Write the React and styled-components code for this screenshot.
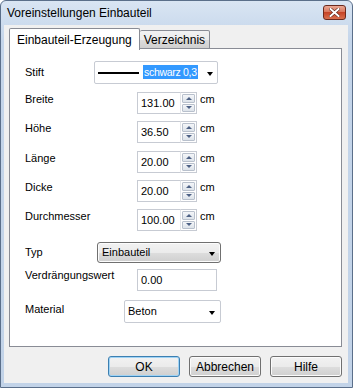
import styled, { createGlobalStyle } from 'styled-components';

const Global = createGlobalStyle`
  html, body {
    margin: 0;
    padding: 0;
    background: #fff;
  }
  * {
    box-sizing: border-box;
  }
`;

const Window = styled.div`
  width: 353px;
  height: 388px;
  display: flex;
  flex-direction: column;
  border: 1px solid #5b6f8a;
  border-radius: 6px 6px 0 0;
  background: linear-gradient(#d9e5f3, #c4d5ea 40px, #c2d3e8);
  font-family: 'Liberation Sans', Arial, sans-serif;
  font-size: 11px;
  color: #000;
  overflow: hidden;
`;

const TitleBar = styled.div`
  height: 24px;
  flex: none;
  display: flex;
  align-items: center;
  justify-content: space-between;
  padding: 0 6px 0 6px;
  font-size: 12px;
`;

const CloseButton = styled.div`
  width: 23px;
  height: 15px;
  margin-top: -2px;
  border: 1px solid #6b2a1e;
  border-radius: 3px;
  background: linear-gradient(#eba894, #d9775e 45%, #c64428 50%, #d9704f);
  display: flex;
  align-items: center;
  justify-content: center;
`;

const Client = styled.div`
  flex: 1;
  margin: 0 4px 4px 3px;
  background: #f0f0f0;
  padding: 2px 6px 0 5px;
  display: flex;
  flex-direction: column;
`;

const TabStrip = styled.div`
  display: flex;
  align-items: flex-end;
  height: 22px;
  position: relative;
  z-index: 1;
`;

const Tab = styled.div`
  height: ${(p) => (p.$active ? 22 : 19)}px;
  padding: 0 ${(p) => (p.$active ? 7 : 4)}px;
  border: 1px solid #898c95;
  border-bottom: ${(p) => (p.$active ? 'none' : '1px solid #898c95')};
  border-left: ${(p) => (p.$active ? '1px solid #898c95' : 'none')};
  border-radius: 2px 2px 0 0;
  background: ${(p) => (p.$active ? '#fff' : 'linear-gradient(#f2f2f2, #ebebeb 50%, #dddddd 51%, #cfcfcf)')};
  display: flex;
  align-items: center;
  font-size: 12px;
  margin-bottom: ${(p) => (p.$active ? -1 : 0)}px;
`;

const Panel = styled.div`
  height: 299px;
  margin-top: -1px;
  border: 1px solid #898c95;
  background: #fff;
  padding: 12px 0 0 15px;
  display: flex;
  flex-direction: column;
`;

const Row = styled.div`
  display: grid;
  grid-template-columns: ${(p) => p.$col}px auto auto;
  justify-content: start;
  align-items: start;
  margin-top: ${(p) => p.$gap || 0}px;
`;

const Label = styled.div`
  padding-top: ${(p) => p.$off || 0}px;
  line-height: 13px;
  white-space: nowrap;
`;

const Combo = styled.div`
  width: ${(p) => p.$w}px;
  height: ${(p) => p.$h || 22}px;
  border: 1px solid ${(p) => (p.$button ? '#707070' : '#c7cbd3')};
  border-radius: ${(p) => (p.$button ? 3 : 2)}px;
  background: ${(p) => (p.$button ? 'linear-gradient(#f2f2f2, #ebebeb 50%, #dddddd 51%, #cfcfcf)' : '#fff')};
  box-shadow: ${(p) => (p.$button ? 'inset 0 0 0 1px #fcfcfc' : 'none')};
  display: flex;
  align-items: center;
  padding: 0 ${(p) => p.$padr || 5}px 0 ${(p) => p.$pad || 3}px;
`;

const ComboText = styled.span`
  flex: 1;
  line-height: 13px;
`;

const PenLine = styled.span`
  flex: none;
  width: 41px;
  height: 2px;
  background: #000;
  margin-right: 4px;
`;

const Selected = styled.span`
  flex: none;
  background: #3399ff;
  color: #fff;
  font-size: 10.5px;
  letter-spacing: -0.3px;
  line-height: 14px;
  height: 14px;
  padding: 0 1px;
  margin-top: -2px;
`;

const Arrow = styled.span`
  flex: none;
  width: 0;
  height: 0;
  margin-left: auto;
  border-left: 3.5px solid transparent;
  border-right: 3.5px solid transparent;
  border-top: 4px solid #000;
  margin-top: 2px;
`;

const Spin = styled.div`
  display: flex;
  height: 22px;
`;

const Input = styled.div`
  width: ${(p) => p.$w || 43}px;
  height: 22px;
  border: 1px solid #c7cbd3;
  border-right: ${(p) => (p.$spin ? 'none' : '1px solid #c7cbd3')};
  background: #fff;
  padding: 4px 0 0 3px;
  line-height: 13px;
`;

const SpinCol = styled.div`
  width: 17px;
  height: 22px;
  display: flex;
  flex-direction: column;
  gap: 1px;
  padding: 1px;
  border: 1px solid #c7cbd3;
  border-left: 1px solid #e4e6ea;
  background: #fff;
`;

const SpinBtn = styled.div`
  flex: 1;
  border: 1px solid #b8c0cc;
  border-radius: 1px;
  background: linear-gradient(#f4f6f9, #dde3ea);
  display: flex;
  align-items: center;
  justify-content: center;
`;

const SpinArrow = styled.span`
  width: 0;
  height: 0;
  border-left: 3px solid transparent;
  border-right: 3px solid transparent;
  ${(p) => (p.$up ? 'border-bottom: 3px solid #4d6185;' : 'border-top: 3px solid #4d6185;')}
`;

const Unit = styled.span`
  margin-left: 3px;
  padding-top: 1px;
  line-height: 13px;
`;

const Footer = styled.div`
  display: flex;
  justify-content: flex-end;
  gap: 9px;
  margin-top: 9px;
`;

const Button = styled.div`
  width: 72px;
  height: 21px;
  border: 1px solid ${(p) => (p.$default ? '#3c7fb1' : '#707070')};
  border-radius: 3px;
  background: linear-gradient(#f2f2f2, #ebebeb 50%, #dddddd 51%, #cfcfcf);
  box-shadow: inset 0 0 0 1px ${(p) => (p.$default ? '#9fd3f5' : '#fbfbfb')};
  display: flex;
  align-items: center;
  justify-content: center;
  font-size: 12px;
`;

const SpinBox = ({ value }) => (
  <>
    <Spin>
      <Input $spin>{value}</Input>
      <SpinCol>
        <SpinBtn>
          <SpinArrow $up />
        </SpinBtn>
        <SpinBtn>
          <SpinArrow />
        </SpinBtn>
      </SpinCol>
    </Spin>
    <Unit>cm</Unit>
  </>
);

const dims = [
  { label: 'Breite', value: '131.00', gap: 8 },
  { label: 'Höhe', value: '36.50', gap: 7 },
  { label: 'Länge', value: '20.00', gap: 8 },
  { label: 'Dicke', value: '20.00', gap: 7 },
  { label: 'Durchmesser', value: '100.00', gap: 7 },
];

export default function App() {
  return (
    <>
      <Global />
      <Window>
        <TitleBar>
          <span>Voreinstellungen Einbauteil</span>
          <CloseButton>
            <svg width="11" height="9" viewBox="0 0 11 9">
              <path d="M1.5 1 L9.5 8 M9.5 1 L1.5 8" stroke="#5a2418" strokeWidth="3.2" strokeLinecap="square" />
              <path d="M1.5 1 L9.5 8 M9.5 1 L1.5 8" stroke="#fff" strokeWidth="2" strokeLinecap="square" />
            </svg>
          </CloseButton>
        </TitleBar>
        <Client>
          <TabStrip>
            <Tab $active>Einbauteil-Erzeugung</Tab>
            <Tab>Verzeichnis</Tab>
          </TabStrip>
          <Panel>
            <Row $col={69}>
              <Label $off={5}>Stift</Label>
              <Combo $w={124} $h={23} $pad={3} $padr={4}>
                <PenLine />
                <Selected>schwarz 0,3</Selected>
                <Arrow />
              </Combo>
            </Row>
            {dims.map((d) => (
              <Row key={d.label} $col={112} $gap={d.gap}>
                <Label $off={1}>{d.label}</Label>
                <SpinBox value={d.value} />
              </Row>
            ))}
            <Row $col={72} $gap={11}>
              <Label $off={4}>Typ</Label>
              <Combo $w={124} $h={21} $button $pad={4}>
                <ComboText>Einbauteil</ComboText>
                <Arrow />
              </Combo>
            </Row>
            <Row $col={112} $gap={6}>
              <Label>Verdrängungswert</Label>
              <Input $w={80}>0.00</Input>
            </Row>
            <Row $col={99} $gap={9}>
              <Label $off={3}>Material</Label>
              <Combo $w={97} $h={23} $pad={3}>
                <ComboText>Beton</ComboText>
                <Arrow />
              </Combo>
            </Row>
          </Panel>
          <Footer>
            <Button $default>OK</Button>
            <Button>Abbrechen</Button>
            <Button>Hilfe</Button>
          </Footer>
        </Client>
      </Window>
    </>
  );
}
